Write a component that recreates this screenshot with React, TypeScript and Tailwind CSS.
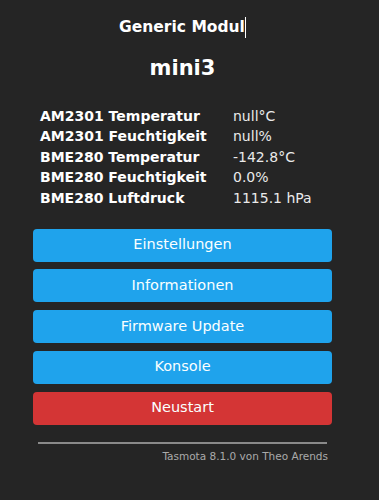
import React from "react";

const rows = [
  { label: "AM2301 Temperatur", value: "null°C" },
  { label: "AM2301 Feuchtigkeit", value: "null%" },
  { label: "BME280 Temperatur", value: "-142.8°C" },
  { label: "BME280 Feuchtigkeit", value: "0.0%" },
  { label: "BME280 Luftdruck", value: "1115.1 hPa" },
];

const buttons = [
  { text: "Einstellungen", red: false },
  { text: "Informationen", red: false },
  { text: "Firmware Update", red: false },
  { text: "Konsole", red: false },
  { text: "Neustart", red: true },
];

export default function App() {
  return (
    <div
      className="w-[379px] h-[500px] bg-[#252525] text-[#eaeaea] overflow-hidden"
      style={{ fontFamily: '"DejaVu Sans", Verdana, sans-serif' }}
    >
      <div className="ml-[33px] w-[299px] flex flex-col">
        <div className="pt-[16px] h-[40px] flex justify-center items-start">
          <span className="text-[15.5px] font-bold leading-[22px] text-white">Generic Modul</span>
          <span className="w-px h-[21px] bg-white mt-[1px]"></span>
        </div>
        <div className="mt-[14px] text-center text-[21px] font-bold leading-[28px] text-white">
          mini3
        </div>
        <div className="mt-[24px] pl-[7px] flex flex-col">
          {rows.map((r) => (
            <div key={r.label} className="flex h-[20.5px] items-center text-[14px]">
              <span className="w-[193px] font-bold text-white">{r.label}</span>
              <span className="text-[#eaeaea]">{r.value}</span>
            </div>
          ))}
        </div>
        <div className="mt-[20px] flex flex-col gap-[7.75px]">
          {buttons.map((b) => (
            <div
              key={b.text}
              className={
                "h-[33px] rounded-[4px] flex items-center justify-center text-[14.5px] text-[#faffff] " +
                (b.red ? "bg-[#d43535]" : "bg-[#1fa3ec]")
              }
            >
              {b.text}
            </div>
          ))}
        </div>
        <div className="mt-[17px] mx-[5px] h-[2px] bg-[#8a8a8a]"></div>
        <div className="mt-[5px] mr-[4px] text-right text-[10.5px] text-[#aaaaaa]">
          Tasmota 8.1.0 von Theo Arends
        </div>
      </div>
    </div>
  );
}
